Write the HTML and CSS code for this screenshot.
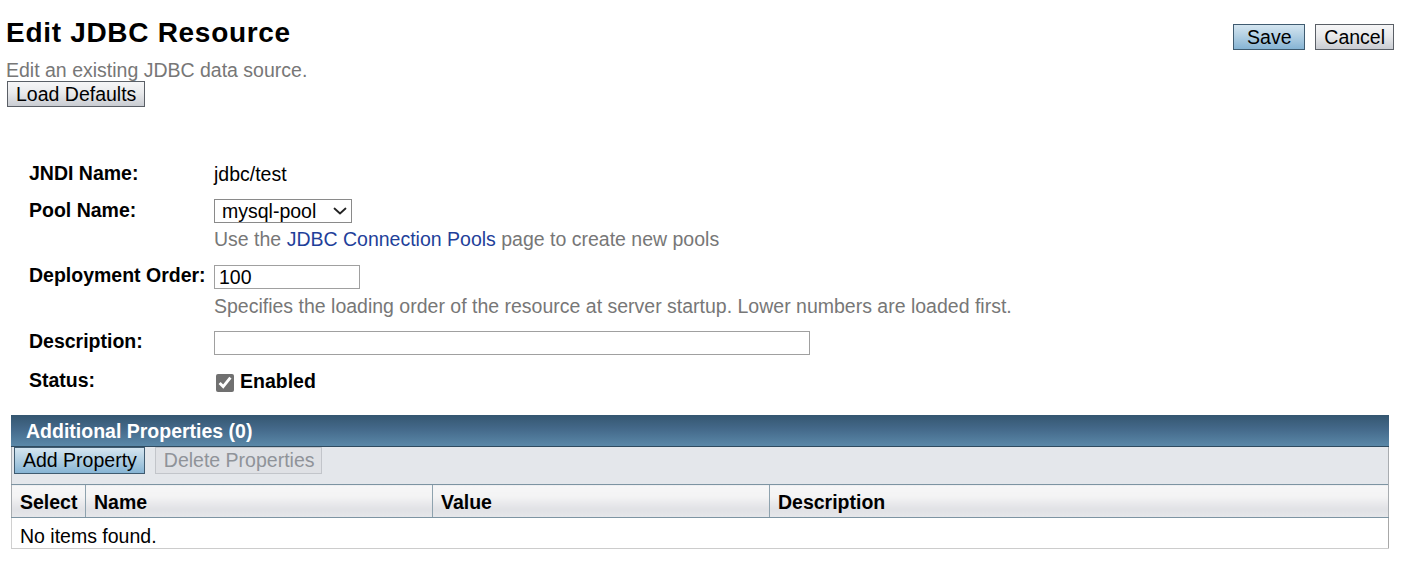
FILE: index.html
```html
<!DOCTYPE html>
<html lang="en">
<head>
<meta charset="utf-8">
<title>Edit JDBC Resource</title>
<link rel="stylesheet" href="styles.css">
</head>
<body>
<div class="page">
  <div class="head">
    <div class="head-main">
      <h1 class="title">Edit JDBC Resource</h1>
      <p class="page-help">Edit an existing JDBC data source.</p>
      <button class="btn btn-load" type="button">Load Defaults</button>
    </div>
    <div class="head-actions">
      <button class="btn btn-primary btn-save" type="button">Save</button>
      <button class="btn" type="button">Cancel</button>
    </div>
  </div>

  <div class="form">
    <div class="row row-jndi">
      <div class="label">JNDI Name:</div>
      <div class="value value-text">jdbc/test</div>
    </div>
    <div class="row row-pool">
      <div class="label">Pool Name:</div>
      <div class="value">
        <div class="select-wrap">
          <select class="select-pool"><option>mysql-pool</option></select>
          <svg class="select-arrow" width="14" height="8" viewBox="0 0 14 8" aria-hidden="true">
            <path d="M1.5 1.5 L7 6.5 L12.5 1.5" fill="none" stroke="#222" stroke-width="1.8" stroke-linecap="round" stroke-linejoin="round"/>
          </svg>
        </div>
        <div class="help help-pool">Use the <a class="link" href="#">JDBC Connection Pools</a> page to create new pools</div>
      </div>
    </div>
    <div class="row row-order">
      <div class="label">Deployment Order:</div>
      <div class="value">
        <input class="input input-order" type="text" value="100">
        <div class="help help-order">Specifies the loading order of the resource at server startup. Lower numbers are loaded first.</div>
      </div>
    </div>
    <div class="row row-desc">
      <div class="label">Description:</div>
      <div class="value">
        <input class="input input-desc" type="text" value="">
      </div>
    </div>
    <div class="row row-status">
      <div class="label">Status:</div>
      <div class="value value-check">
        <input class="check" type="checkbox" checked id="enabled">
        <label class="check-label" for="enabled">Enabled</label>
      </div>
    </div>
  </div>

  <div class="props">
    <div class="props-title">Additional Properties (0)</div>
    <div class="props-actions">
      <button class="btn btn-primary btn-small" type="button">Add Property</button>
      <button class="btn btn-disabled btn-small" type="button" disabled>Delete Properties</button>
    </div>
    <table class="grid">
      <colgroup>
        <col class="c-select">
        <col class="c-name">
        <col class="c-value">
        <col class="c-desc">
      </colgroup>
      <thead>
        <tr>
          <th>Select</th>
          <th>Name</th>
          <th>Value</th>
          <th>Description</th>
        </tr>
      </thead>
      <tbody>
        <tr>
          <td colspan="4">No items found.</td>
        </tr>
      </tbody>
    </table>
  </div>
</div>
</body>
</html>
```

FILE: styles.css
```css
html, body {
  margin: 0;
  padding: 0;
  background: #ffffff;
}

body {
  font-family: "Liberation Sans", Arial, sans-serif;
  font-size: 19.5px;
  color: #000000;
}

.page {
  padding: 17px 16px 0 6px;
}

/* ---------- header ---------- */
.head {
  display: flex;
  justify-content: space-between;
  align-items: flex-start;
}

.title {
  margin: 0;
  font-size: 28px;
  line-height: 32px;
  font-weight: bold;
  letter-spacing: 0.7px;
}

.page-help {
  margin: 10px 0 0 0;
  line-height: 22px;
  color: #777777;
}

.head-actions {
  display: flex;
  gap: 10px;
  padding-top: 7px;
  margin-right: -5px;
}

.btn {
  font-family: "Liberation Sans", Arial, sans-serif;
  font-size: 19.5px;
  line-height: 22px;
  height: 26px;
  padding: 1px 8px;
  margin: 0;
  border: 1px solid #5a5f66;
  border-radius: 0;
  color: #000000;
  background: linear-gradient(#f6f6f7 0%, #e9eaec 45%, #c9ccd2 100%);
  box-sizing: border-box;
  white-space: nowrap;
  cursor: pointer;
}

.btn-load {
  margin: 0 0 0 1px;
}

.btn-primary {
  border-color: #3f5b70;
  background: linear-gradient(#d4e5f0 0%, #b3d0e3 45%, #86b4d4 100%);
}

.btn-save {
  min-width: 72px;
}

.btn-disabled {
  color: #8f9399;
  border-color: #c2c5ca;
  background: #dfe1e5;
  cursor: default;
}

/* ---------- form ---------- */
.form {
  margin-top: 55px;
}

.row {
  display: flex;
  align-items: flex-start;
}

.label {
  flex: 0 0 208px;
  box-sizing: border-box;
  padding-left: 23px;
  font-weight: bold;
  line-height: 22px;
}

.row-pool .label {
  padding-top: 1px;
}

.value {
  flex: 1 1 auto;
  line-height: 22px;
}

.value-text {
  padding-top: 1px;
}

.row-jndi { margin-bottom: 13px; }
.row-pool { margin-bottom: 14px; }
.row-order { margin-bottom: 13px; }
.row-desc { margin-bottom: 14px; }

.select-wrap {
  position: relative;
  width: 138px;
  margin-top: 1px;
}

.select-pool {
  display: block;
  width: 138px;
  height: 24px;
  box-sizing: border-box;
  -webkit-appearance: none;
  appearance: none;
  font-family: "Liberation Sans", Arial, sans-serif;
  font-size: 19.5px;
  line-height: 22px;
  color: #000;
  border: 1px solid #8a8a8a;
  border-radius: 0;
  background: #ffffff;
  padding: 0 22px 0 7px;
}

.select-arrow {
  position: absolute;
  right: 5px;
  top: 8px;
  pointer-events: none;
}

.input {
  display: block;
  margin-top: 1px;
  height: 24px;
  box-sizing: border-box;
  font-family: "Liberation Sans", Arial, sans-serif;
  font-size: 19.5px;
  color: #000;
  border: 1px solid #a0a0a0;
  border-radius: 0;
  padding: 0 4px;
  background: #ffffff;
}

.input-order { width: 146px; }
.input-desc { width: 596px; }

.help {
  color: #777777;
  line-height: 22px;
}

.help-pool { margin-top: 5px; }
.help-order { margin-top: 6px; }

.link {
  color: #1f3f9a;
  text-decoration: none;
}

.value-check {
  display: flex;
  align-items: center;
  padding-top: 1px;
}

.check {
  width: 18px;
  height: 18px;
  margin: 4px 6px 0 2px;
  accent-color: #707070;
}

.check-label {
  font-weight: bold;
}

/* ---------- properties table ---------- */
.props {
  margin: 23px 0 0 5px;
}

.props-title {
  height: 31px;
  line-height: 33px;
  overflow: hidden;
  padding-left: 15px;
  color: #ffffff;
  font-weight: bold;
  background: linear-gradient(#345670 0%, #44698a 45%, #5a88a8 100%);
  border-bottom: 1px solid #2f4b60;
}

.props-actions {
  display: flex;
  gap: 10px;
  height: 37px;
  box-sizing: border-box;
  padding: 0 0 0 2px;
  background: #e4e7eb;
  border-left: 1px solid #a8acb0;
  border-right: 1px solid #a8acb0;
}

.btn-small {
  height: 27px;
  padding: 0 7px 2px 8px;
}

.grid {
  width: 100%;
  border-collapse: collapse;
  table-layout: fixed;
}

.c-select { width: 74px; }
.c-name { width: 347px; }
.c-value { width: 337px; }
.c-desc { width: auto; }

.grid th {
  text-align: left;
  font-weight: bold;
  line-height: 22px;
  padding: 6px 8px 4px 8px;
  background: linear-gradient(#f7f7f7 0%, #f3f3f4 35%, #e0e1e5 75%, #e6e7ea 100%);
  border-top: 1px solid #7d94a2;
  border-bottom: 1px solid #7d94a2;
  border-left: 1px solid #8ea2ae;
}

.grid th:first-child {
  border-left: 1px solid #a8acb0;
}

.grid th:last-child {
  border-right: 1px solid #a8acb0;
}

.grid td {
  line-height: 22px;
  padding: 7px 8px 1px 8px;
  border-left: 1px solid #d0d0d0;
  border-right: 1px solid #a8a8a8;
  border-bottom: 1px solid #cccccc;
}
```
